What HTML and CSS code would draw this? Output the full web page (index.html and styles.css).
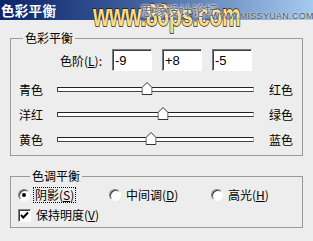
FILE: index.html
```html
<!DOCTYPE html>
<html>
	<head>
		<meta charset="UTF-8">
		<title>色彩平衡</title>
		<link rel="stylesheet" href="styles.css">
	</head>
	<body>
		<div class="window">
			<div class="titlebar"><span class="title">色彩平衡</span></div>
			<!--水印-->
			<div class="watermark">
				<span class="wm-main">www.86ps.com</span>
				<span class="wm-cn">思缘设计论坛</span>
				<span class="wm-url">WWW.MISSYUAN.COM</span>
			</div>
			<div class="content">
				<fieldset class="group group-color">
					<legend>色彩平衡</legend>
					<div class="levels">
						<label>色阶(<u>L</u>):</label>
						<input class="field" value="-9">
						<input class="field" value="+8">
						<input class="field" value="-5">
					</div>
					<div class="sliders">
						<span class="name">青色</span>
						<div class="track"><span class="thumb" style="left: 45.5%;"><svg width="11" height="13" viewBox="0 0 11 13"><path d="M0.5 5.5 L5.5 0.5 L10.5 5.5 L10.5 12.5 L0.5 12.5 Z" fill="#fff" stroke="#333"/></svg></span></div>
						<span class="name right">红色</span>

						<span class="name">洋红</span>
						<div class="track"><span class="thumb" style="left: 54%;"><svg width="11" height="13" viewBox="0 0 11 13"><path d="M0.5 5.5 L5.5 0.5 L10.5 5.5 L10.5 12.5 L0.5 12.5 Z" fill="#fff" stroke="#333"/></svg></span></div>
						<span class="name right">绿色</span>

						<span class="name">黄色</span>
						<div class="track"><span class="thumb" style="left: 47.5%;"><svg width="11" height="13" viewBox="0 0 11 13"><path d="M0.5 5.5 L5.5 0.5 L10.5 5.5 L10.5 12.5 L0.5 12.5 Z" fill="#fff" stroke="#333"/></svg></span></div>
						<span class="name right">蓝色</span>
					</div>
				</fieldset>
				<fieldset class="group group-tone">
					<legend>色调平衡</legend>
					<div class="options">
						<label class="opt"><span class="radio checked"></span><span class="focus">阴影(<u>S</u>)</span></label>
						<label class="opt"><span class="radio"></span><span>中间调(<u>D</u>)</span></label>
						<label class="opt"><span class="radio"></span><span>高光(<u>H</u>)</span></label>
					</div>
					<label class="opt check-row">
						<span class="checkbox"><svg width="11" height="11" viewBox="0 0 11 11"><path d="M2 5 L4.3 7.5 L9 2.5" fill="none" stroke="#000" stroke-width="2"/></svg></span>
						<span>保持明度(<u>V</u>)</span>
					</label>
				</fieldset>
			</div>
		</div>
	</body>
</html>
```

FILE: styles.css
```css
body{margin:0;}
.window{
	width:313px; height:241px; position:relative; overflow:hidden;
	background:#ededed; color:#000;
	font-family:"Noto Sans CJK SC","Liberation Sans",sans-serif; font-size:12px;
}
.titlebar{height:20px; background:linear-gradient(90deg,#0a246a 0%,#3a5a98 40%,#a6caf0 100%);}
.title{display:block; padding-left:1px; line-height:20px; color:#fff; font-weight:bold; font-size:13.5px; letter-spacing:0.3px;}

/* 水印 */
.watermark{position:absolute; left:0; top:0; width:313px; height:32px; pointer-events:none;}
.wm-main{
	position:absolute; left:93px; top:1px; line-height:30px;
	font-family:"Liberation Sans",sans-serif; font-weight:bold; font-size:31px;
	color:#f6dc8c; -webkit-text-stroke:1.5px #2b1c00; paint-order:stroke fill;
	transform:scaleX(0.68); transform-origin:0 0; letter-spacing:-0.5px;
}
.wm-cn{
	position:absolute; left:140px; top:2px; line-height:16px; font-size:13px; color:#6a6a6a;
	text-shadow:0 0 2px #fff,0 0 2px #fff;
}
.wm-url{
	position:absolute; left:211px; top:11px; line-height:10px; font-family:"Liberation Sans",sans-serif;
	font-size:9px; color:#555; letter-spacing:0.3px; text-shadow:0 0 2px #fff;
}

.content{padding-top:11px;}
.group{
	margin:0 0 0 10px; width:293px; box-sizing:border-box;
	border:1px solid #9a9a9a; padding:0; min-width:0;
}
.group legend{margin-left:12px; padding:0 2px; line-height:14px;}

.levels{display:grid; grid-template-columns:91px 40px 40px 40px; column-gap:10px; margin-top:4px; align-items:center;}
.levels label{text-align:right;}
.field{
	height:22px; width:40px; box-sizing:border-box; margin:0; padding:0 0 0 2px;
	border:1px solid; border-color:#7a7a7a #fff #fff #7a7a7a;
	box-shadow:inset 1px 1px #404040; background:#fff;
	font-family:"Liberation Sans",sans-serif; font-size:13px; color:#000;
}

.sliders{display:grid; grid-template-columns:38px 197px 1fr; grid-auto-rows:25px; align-items:center; margin-top:6px; padding:0 0 3px 8px;}
.name{line-height:14px;}
.name.right{padding-left:15px;}
.track{
	height:5px; box-sizing:border-box; position:relative; margin-top:-1px;
	background:#fff; border-top:1px solid #222; border-bottom:1px solid #444;
	border-left:1px solid #444; border-right:1px solid #bbb;
}
.thumb{position:absolute; top:-6px; width:11px; height:13px; transform:translateX(-50%);}
.thumb svg{display:block;}

.group-tone{margin-top:13px; padding:5px 0 5px 7px;}
.options{display:grid; grid-template-columns:91px 102px auto; height:14px; align-items:center;}
.opt{display:flex; align-items:center; line-height:14px;}
.radio{
	width:12px; height:12px; box-sizing:border-box; border-radius:50%; flex:none;
	background:#fff; border:1px solid; border-color:#808080 #fff #fff #808080;
	box-shadow:inset 1px 1px #404040; position:relative; margin-right:5px;
}
.radio.checked::after{
	content:""; position:absolute; left:3px; top:3px; width:4px; height:4px;
	border-radius:50%; background:#000;
}
.focus{outline:1px dotted #000; outline-offset:0; padding:0 1px; margin-left:-1px;}
.check-row{margin-top:6px; height:14px;}
.checkbox{
	width:13px; height:13px; box-sizing:border-box; flex:none; margin-right:5px;
	background:#fff; border:1px solid; border-color:#808080 #fff #fff #808080;
	box-shadow:inset 1px 1px #404040; display:flex; align-items:center; justify-content:center;
}
.checkbox svg{display:block;}
```
